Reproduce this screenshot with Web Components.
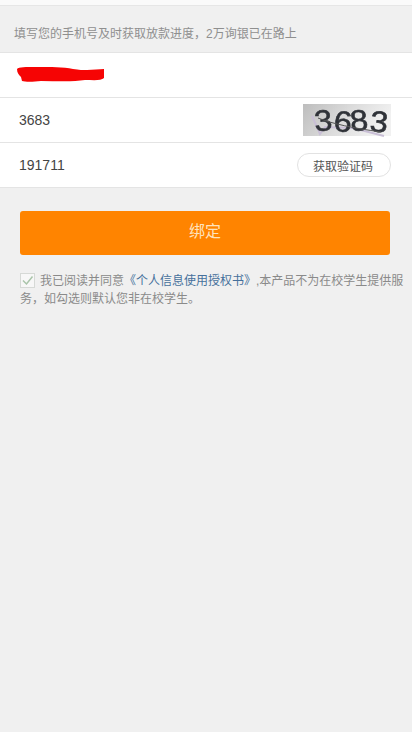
<!DOCTYPE html>
<html lang="zh">
<head>
<meta charset="utf-8">
<title>绑定</title>
<style>
  html, body { margin: 0; padding: 0; background: #f0f0f0; }
  body { font-family: "Liberation Sans", "Noto Sans CJK SC", sans-serif; }
</style>
</head>
<body>
<bind-page>
  <form-row>
    <svg width="90" height="18" viewBox="0 0 90 18" style="display:block;margin-left:-2px">
      <path fill="#f60404" d="M0 3 C2 1 8 1 20 1 C34 1 46 1 56 3 C62 4 66 4 70 4 C76 4 82 3 87 3 L87 12 C84 15 76 14 68 14 C56 16 40 15 24 15 C16 16 8 16 5 15 L4 11 C2 9 0 7 0 3Z"/>
    </svg>
  </form-row>
  <form-row>3683<captcha-image slot="end"></captcha-image></form-row>
  <form-row>191711<sms-button slot="end">获取验证码</sms-button></form-row>
</bind-page>

<script>
class FormRow extends HTMLElement {
  constructor() {
    super()
    this.attachShadow({ mode: 'open' })
    this.shadowRoot.innerHTML = `
      <style>
        :host {
          display: flex;
          align-items: center;
          justify-content: space-between;
          height: 44px;
          padding: 0 21px 0 19px;
          background: #fff;
          border-bottom: 1px solid #e4e4e4;
          font-size: 14px;
          color: #444;
        }
        :host(:first-child) { border-top: 1px solid #e4e4e4; }
      </style>
      <div><slot></slot></div>
      <slot name="end"></slot>
    `
  }
}

class CaptchaImage extends HTMLElement {
  constructor() {
    super()
    this.attachShadow({ mode: 'open' })
    this.shadowRoot.innerHTML = `
      <style>
        :host { display: block; width: 88px; height: 32px; }
        svg { display: block; overflow: visible; }
        text { filter: blur(0.4px); }
      </style>
      <svg width="88" height="32" viewBox="0 0 88 32">
        <defs>
          <linearGradient id="bg" x1="0" y1="0" x2="1" y2="0.3">
            <stop offset="0" stop-color="#bdbdbd"/>
            <stop offset="0.55" stop-color="#dcdcdc"/>
            <stop offset="1" stop-color="#f1f1f1"/>
          </linearGradient>
        </defs>
        <rect width="88" height="32" fill="url(#bg)"/>
        <path d="M9 12 L17 30 L22 23 L50 24 L81 32" fill="none" stroke="#c9bfd6" stroke-width="2"/>
        <text x="12" y="23" font-family="Liberation Sans, sans-serif" font-size="25" fill="#2f3238" stroke="#2f3238" stroke-width="0.5" textLength="72" lengthAdjust="spacingAndGlyphs" rotate="-4 5 -5 6" transform="scale(1 1.18)">3683</text>
        <path d="M15 14 C30 20 50 24 78 28" fill="none" stroke="#555" stroke-width="1"/>
      </svg>
    `
  }
}

class SmsButton extends HTMLElement {
  constructor() {
    super()
    this.attachShadow({ mode: 'open' })
    this.shadowRoot.innerHTML = `
      <style>
        :host {
          display: flex;
          align-items: center;
          justify-content: center;
          box-sizing: border-box;
          width: 94px;
          height: 24px;
          padding-right: 2px;
          border: 1px solid #e2e2e2;
          border-radius: 12px;
          background: #fff;
          font-size: 12px;
          color: #555;
        }
      </style>
      <slot></slot>
    `
  }
}

class PrimaryButton extends HTMLElement {
  constructor() {
    super()
    this.attachShadow({ mode: 'open' })
    this.shadowRoot.innerHTML = `
      <style>
        :host {
          display: flex;
          align-items: center;
          justify-content: center;
          box-sizing: border-box;
          height: 44px;
          margin: 23px 22px 0 20px;
          padding-bottom: 6px;
          border-radius: 3px;
          background: #ff8400;
          font-size: 16px;
          color: #ffe3bd;
        }
      </style>
      <slot></slot>
    `
  }
}

class AgreeNote extends HTMLElement {
  constructor() {
    super()
    this.attachShadow({ mode: 'open' })
    this.shadowRoot.innerHTML = `
      <style>
        :host {
          display: block;
          margin: 17px 8px 0 20px;
          font-size: 12px;
          line-height: 18px;
          color: #8a8a8a;
        }
        .box {
          display: inline-flex;
          align-items: center;
          justify-content: center;
          box-sizing: border-box;
          width: 15px;
          height: 15px;
          margin-right: 5px;
          vertical-align: -2px;
          border: 1px solid #d6d9d6;
          background: #f7f7f7;
        }
        a { color: #46709c; text-decoration: none; }
      </style>
      <span class="box">
        <svg width="13" height="13" viewBox="0 0 13 13"><path d="M2 6.5 L5.5 10 L11.5 2.5" fill="none" stroke="#a9c4a9" stroke-width="1.5"/></svg>
      </span>我已阅读并同意<a>《个人信息使用授权书》</a>,本产品不为在校学生提供服务&#xFF0C;如勾选则默认您非在校学生。
    `
  }
}

class BindPage extends HTMLElement {
  constructor() {
    super()
    this.attachShadow({ mode: 'open' })
    this.shadowRoot.innerHTML = `
      <style>
        :host { display: block; min-height: 732px; background: #f0f0f0; }
        .strip { height: 5px; background: #fafafa; border-bottom: 1px solid #e6e6e6; }
        .tip {
          height: 46px;
          padding-left: 14px;
          box-sizing: border-box;
          font-size: 12px;
          line-height: 56px;
          color: #8f8f8f;
        }
      </style>
      <div class="strip"></div>
      <div class="tip">填写您的手机号及时获取放款进度&#xFF0C;2万询银已在路上</div>
      <slot></slot>
      <primary-button>绑定</primary-button>
      <agree-note></agree-note>
    `
  }
}

customElements.define('form-row', FormRow)
customElements.define('captcha-image', CaptchaImage)
customElements.define('sms-button', SmsButton)
customElements.define('primary-button', PrimaryButton)
customElements.define('agree-note', AgreeNote)
customElements.define('bind-page', BindPage)
</script>
</body>
</html>
